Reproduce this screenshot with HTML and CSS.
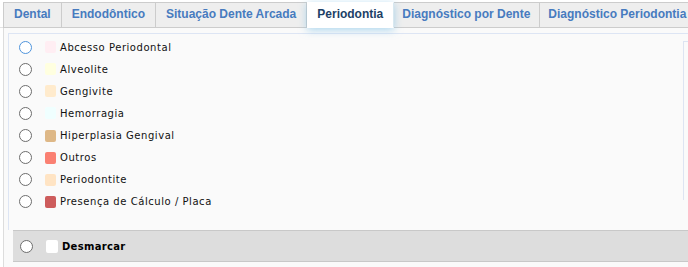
FILE: index.html
```html
<!DOCTYPE html>
<html>
<head>
<meta charset="utf-8">
<link rel="stylesheet" href="styles.css">
</head>
<body>
<div class="tabs">
  <div class="tab">Dental</div>
  <div class="tab">Endodôntico</div>
  <div class="tab">Situação Dente Arcada</div>
  <div class="tab active">Periodontia</div>
  <div class="tab">Diagnóstico por Dente</div>
  <div class="tab">Diagnóstico Periodontia</div>
</div>
<div class="content">
  <div class="panel">
    <div class="list">
      <div class="row"><span class="radio focus"></span><span class="sw" style="background:#ffeef3"></span><span class="lbl">Abcesso Periodontal</span></div>
      <div class="row"><span class="radio"></span><span class="sw" style="background:#ffffe0"></span><span class="lbl">Alveolite</span></div>
      <div class="row"><span class="radio"></span><span class="sw" style="background:#ffebcd"></span><span class="lbl">Gengivite</span></div>
      <div class="row"><span class="radio"></span><span class="sw" style="background:#f0ffff"></span><span class="lbl">Hemorragia</span></div>
      <div class="row"><span class="radio"></span><span class="sw" style="background:#deb887"></span><span class="lbl">Hiperplasia Gengival</span></div>
      <div class="row"><span class="radio"></span><span class="sw" style="background:#fa8072"></span><span class="lbl">Outros</span></div>
      <div class="row"><span class="radio"></span><span class="sw" style="background:#ffe4c4"></span><span class="lbl">Periodontite</span></div>
      <div class="row"><span class="radio"></span><span class="sw" style="background:#cd5c5c"></span><span class="lbl">Presença de Cálculo / Placa</span></div>
    </div>
    <div class="sidebox"></div>
  </div>
  <div class="footer">
    <div class="row"><span class="radio"></span><span class="sw white"></span><span class="lbl bold">Desmarcar</span></div>
  </div>
</div>
</body>
</html>
```
FILE: styles.css
```css
html, body {
  margin: 0;
  padding: 0;
  background: #ffffff;
  width: 688px;
  height: 267px;
  overflow: hidden;
}
.tabs {
  display: flex;
  padding: 2px 0 0 3px;
  height: 25px;
  border-bottom: 1px solid #e3e3e3;
  white-space: nowrap;
}
.tab {
  flex: none;
  height: 24px;
  line-height: 23px;
  padding: 0 10px;
  background: #eeeeee;
  border: 1px solid #cccccc;
  border-left: 0;
  font-family: "Liberation Sans", Arial, sans-serif;
  font-weight: bold;
  font-size: 12px;
  color: #477bbf;
}
.tab:first-child {
  border-left: 1px solid #cccccc;
}
.tab:nth-child(n+5) {
  padding: 0 9px 0 8px;
}
.tab.active {
  background: #ffffff;
  color: #1d3f66;
  box-shadow: 0 2px 8px rgba(120, 190, 230, 0.6);
  position: relative;
  z-index: 1;
  border-color: #ffffff;
  border-right: 1px solid #d8e8f0;
}
.content {
  margin-left: 3px;
  border-left: 1px solid #dddddd;
  background: #fafafa;
  height: 239px;
  padding-top: 5px;
}
.panel {
  margin-left: 4px;
  border-top: 1px solid #dde5f4;
  border-left: 1px solid #dde5f4;
  height: 196px;
  display: flex;
  justify-content: space-between;
}
.list {
  padding-top: 2px;
  padding-left: 10px;
}
.row {
  display: flex;
  align-items: center;
  height: 22px;
}
.list .row:nth-child(n+2) {
  margin-top: 0.15px;
}
.radio {
  width: 11px;
  height: 11px;
  border: 1px solid #6d6d6d;
  border-radius: 50%;
  background: #ffffff;
  flex: none;
}
.radio.focus {
  border-color: #4f94dc;
}
.sw {
  width: 11px;
  height: 12px;
  border-radius: 2px;
  margin-left: 13px;
  margin-right: 4px;
  flex: none;
}
.sw.white {
  background: #ffffff;
  width: 12px;
  height: 13px;
}
.lbl {
  font-family: "DejaVu Sans", Verdana, sans-serif;
  font-size: 10px;
  color: #111111;
  letter-spacing: 0.55px;
}
.lbl.bold {
  font-weight: bold;
  color: #000000;
  letter-spacing: 0.3px;
}
.sidebox {
  width: 4px;
  margin-top: 7px;
  height: 158px;
  border-top: 1px solid #dde4f2;
  border-left: 1px solid #dde4f2;
}
.footer {
  margin-left: 9px;
  background: #dddddd;
  border-top: 1px solid #c8c8c8;
  border-bottom: 1px solid #c8c8c8;
  height: 30px;
  padding-left: 7px;
  display: flex;
  align-items: center;
}
```
